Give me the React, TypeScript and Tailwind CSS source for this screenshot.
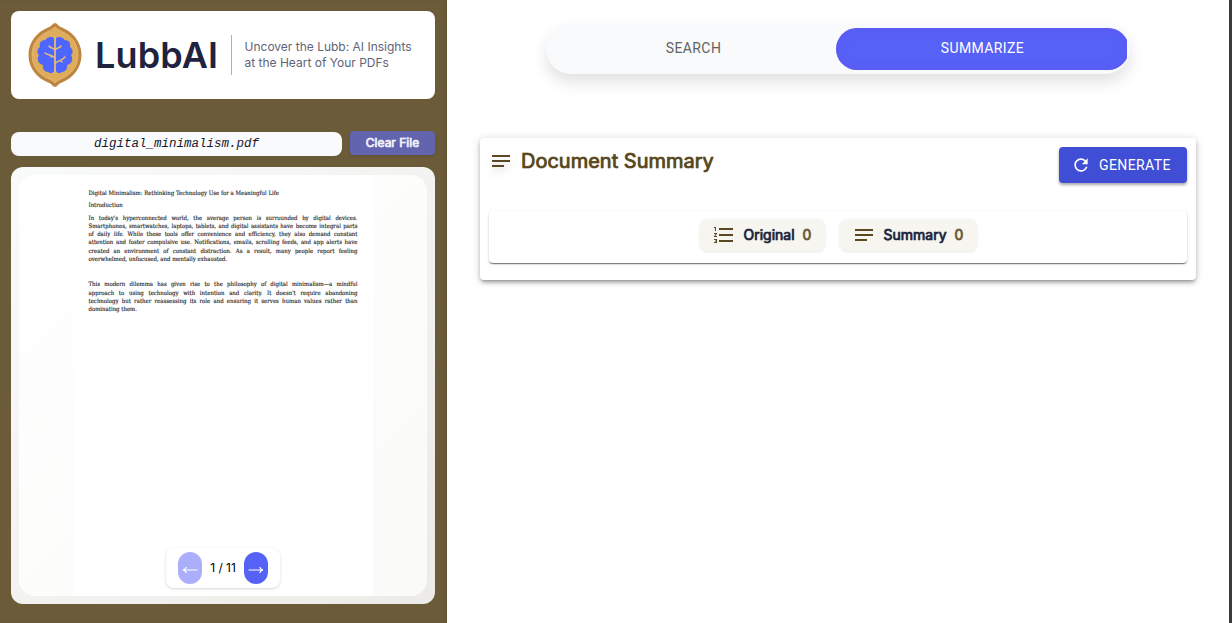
import React from "react";
import { MdFormatListNumbered, MdNotes, MdRefresh } from "react-icons/md";

const inter = "font-['Inter',sans-serif]";
const strong = "font-normal [-webkit-text-stroke:0.5px_currentColor] [text-shadow:0_0_1px_currentColor]";

function Logo() {
  return (
    <svg className="h-[64px] w-[54px]" viewBox="0 0 54 64">
      <path d="M27 0C29 0 30 3 34 4.500C45 9 53.500 19 53.500 32C53.500 45 45 55 34 59.500C30 61 29 64 27 64C25 64 24 61 20 59.500C9 55 .5 45 .5 32C.5 19 9 9 20 4.500C24 3 25 0 27 0Z" fill="#bd8540" />
      <path d="M27 4C29 6 31 7 34 8.500C44 13 50 21 50 32C50 43 44 51 34 55.500C31 57 29 58 27 60C25 58 23 57 20 55.500C10 51 4 43 4 32C4 21 10 13 20 8.500C23 7 25 6 27 4Z" fill="#dfac5c" stroke="#e9c17c" strokeWidth=".7" />
      <path d="M26.300 15C23 13 19 14 17.500 17C13 17 11 20 12 24C9 26 8.500 30 11 32C8.500 36 10 41 15 42C14 46 17 49 20 49C22 51 25 50 26.300 48Z" fill="#4d66ff" />
      <path d="M27.700 15C31 13 35 14 36.500 17C41 17 43 20 42 24C45 26 45.500 30 43 32C45.500 36 44 41 39 42C40 46 37 49 34 49C32 51 29 50 27.700 48Z" fill="#4d66ff" />
      <path d="M27 14V49M26.500 35C24 31 20 33 17 30M22 32L23.500 34M26.500 27C25 24 23 26 21 23M27 27C29 24 31 26 33 23M27 41C29 37 33 39 37 34M32 37.500L34 39" fill="none" stroke="#e8bd79" strokeWidth="1.400" strokeLinecap="round" />
    </svg>
  );
}

function Arrow({ flip }: { flip?: boolean }) {
  return (
    <svg className={flip ? "mt-[3px] h-[8px] w-[16px] rotate-180" : "mt-[3px] h-[8px] w-[16px]"} viewBox="0 0 16 8" fill="none" stroke="white" strokeWidth="1.100">
      <path d="M.5 4H15M11.500 1Q12.500 3.500 15 4Q12.500 4.500 11.500 7" />
    </svg>
  );
}

const first = [
  "In today's hyperconnected world, the average person is surrounded by digital devices.",
  "Smartphones, smartwatches, laptops, tablets, and digital assistants have become integral parts",
  "of daily life. While these tools offer convenience and efficiency, they also demand constant",
  "attention and foster compulsive use. Notifications, emails, scrolling feeds, and app alerts have",
  "created an environment of constant distraction. As a result, many people report feeling",
  "overwhelmed, unfocused, and mentally exhausted.",
];
const second = [
  "This modern dilemma has given rise to the philosophy of digital minimalism—a mindful",
  "approach to using technology with intention and clarity. It doesn't require abandoning",
  "technology but rather reassessing its role and ensuring it serves human values rather than",
  "dominating them.",
];

function Paragraph({ lines }: { lines: string[] }) {
  return (
    <div>
      {lines.map((line, i) => (
        <p key={line} className={i < lines.length - 1 ? "[text-align-last:justify]" : "whitespace-nowrap"}>
          {line}
        </p>
      ))}
    </div>
  );
}

function Sidebar() {
  return (
    <aside className="flex h-full w-[447px] shrink-0 flex-col bg-[#6b5b38] px-[11px] pt-[11px] pr-[12px] shadow-[inset_-3px_0_4px_-2px_rgba(0,0,0,0.12)]">
      <header className="flex h-[88px] shrink-0 items-center rounded-[8px] bg-white pl-[17px]">
        <Logo />
        <h1 className="ml-[13px] w-[136px] font-['Inter',sans-serif] text-[36px] leading-none font-semibold tracking-[0.150px] text-[#1f2340]">LubbAI</h1>
        <p className={`${inter} h-[40px] border-l border-[#b5b0a5] pt-[4px] pl-[12.500px] text-[12px] leading-[16px] whitespace-nowrap text-[#626477]`}>
          Uncover the Lubb: AI Insights<br />at the Heart of Your PDFs
        </p>
      </header>
      <div className="mt-[32px] flex h-[25px] shrink-0 items-end gap-[8px]">
        <div className="h-[24px] w-[331px] rounded-[8px] bg-[#f9fafc] text-center font-['Liberation_Mono',monospace] text-[12.500px] leading-[24px] text-[#16182e] italic">digital_minimalism.pdf</div>
        <button className={`${inter} ${strong} h-[24px] w-[85px] self-start rounded-[4px] bg-[#6264ae] text-[12px] leading-[24px] text-[#f1f1fa] shadow-sm`}>Clear File</button>
      </div>
      <section className="mt-[11px] h-[437px] rounded-[12px] bg-linear-to-br from-[#f9fafb] to-[#ecebe7] p-[8px]">
        <div className="relative flex h-[421px] justify-center overflow-hidden rounded-[16px] bg-linear-to-br from-white to-[#fafaf8]">
          <div className="w-[299px] bg-white pt-[14px] pr-[15px] pl-[15px] font-['DejaVu_Serif_Condensed','DejaVu_Serif',serif] text-[6px] leading-[8.280px] text-[#111] [-webkit-text-stroke:0.1px_currentColor]">
            <p>Digital Minimalism: Rethinking Technology Use for a Meaningful Life</p>
            <p className="mt-[4px]">Introduction</p>
            <div className="mt-[4px]"><Paragraph lines={first} /></div>
            <div className="mt-[17px]"><Paragraph lines={second} /></div>
          </div>
          <div className="absolute top-[373px] left-[147px] flex h-[40px] w-[114px] items-center justify-center gap-[8px] rounded-[8px] bg-white shadow-[0_1px_3px_rgba(0,0,0,0.16)]">
            <button aria-label="Previous page" className="flex h-[32px] w-[24px] items-center justify-center rounded-full bg-[#abaefa]"><Arrow flip /></button>
            <span className={`${inter} w-[26px] text-center text-[12px] whitespace-nowrap text-black`}>1 / 11</span>
            <button aria-label="Next page" className="flex h-[32px] w-[24px] items-center justify-center rounded-full bg-[#5661f6]"><Arrow /></button>
          </div>
        </div>
      </section>
    </aside>
  );
}

export default function App() {
  return (
    <div className="flex h-[623px] w-[1232px] overflow-hidden bg-white">
      <Sidebar />
      <main className="flex min-w-0 flex-1 flex-col px-[33px] pt-[24px]">
        <nav className="ml-[66px] flex h-[50px] w-[584px] shrink-0 rounded-full bg-[#f9fafc] py-[4px] pr-[3px] font-['Roboto',sans-serif] text-[14px] tracking-[0.400px] shadow-[0_8px_16px_rgba(0,0,0,0.12)]">
          <button className="w-[290px] shrink-0 pb-[1px] pl-[5px] text-[#626262]">SEARCH</button>
          <div className="w-[291px] shrink-0 overflow-hidden">
            <button className="h-[42px] w-[293px] rounded-[21px] bg-[#5661f6] pb-[1px] text-white shadow-[inset_0_0_10px_rgba(100,80,245,0.7)]">SUMMARIZE</button>
          </div>
        </nav>
        <section className="mt-[64px] h-[142px] w-[716px] rounded-[4px] bg-white px-[9px] pt-[9px] shadow-[0_3px_3px_-2px_rgba(0,0,0,0.25),0_3px_4px_rgba(0,0,0,0.18),0_1px_8px_rgba(0,0,0,0.16)]">
          <div className="flex h-[64px] items-start">
            <MdNotes className="mt-[2px] h-[24px] w-[24px] text-[#5b4820] drop-shadow-[0_5px_4px_rgba(0,0,0,0.15)]" />
            <h2 className={`${inter} ${strong} ml-[8px] text-[20px] leading-[28px] text-[#5b4820]`}>Document Summary</h2>
            <button className="ml-auto flex h-[36px] w-[128px] items-center rounded-[4px] bg-[#404ed6] pl-[12px] font-['Roboto',sans-serif] text-[14px] tracking-[0.400px] text-white shadow-[0_2px_3px_rgba(0,0,0,0.35)]">
              <MdRefresh className="mr-[8px] h-[20px] w-[20px]" />
              GENERATE
            </button>
          </div>
          <div className="flex h-[52px] justify-center gap-[15px] rounded-[4px] bg-white pt-[8px] shadow-[0_2px_1px_-1px_rgba(0,0,0,0.3),0_1px_1px_rgba(0,0,0,0.24),0_1px_3px_rgba(0,0,0,0.16)]">
            <div className={`${inter} ${strong} flex h-[32px] w-[125px] items-center rounded-[8px] bg-[#f6f5f0] pb-[1px] pl-[12px] text-[14px] text-[#23253d] shadow-[0_1px_3px_rgba(0,0,0,0.1)]`}>
              <MdFormatListNumbered className="h-[24px] w-[24px] text-[#5b4820]" stroke="none" />
              <span className="ml-[8px]">Original</span><span className="ml-[8px] text-[#6b5b38]">0</span>
            </div>
            <div className={`${inter} ${strong} flex h-[32px] w-[137px] items-center rounded-[8px] bg-[#f6f5f0] pb-[1px] pl-[12px] text-[14px] text-[#23253d] shadow-[0_1px_3px_rgba(0,0,0,0.1)]`}>
              <MdNotes className="h-[24px] w-[24px] text-[#5b4820]" />
              <span className="ml-[8px]">Summary</span><span className="ml-[8px] text-[#6b5b38]">0</span>
            </div>
          </div>
        </section>
      </main>
      <div className="w-[3px] shrink-0 bg-[#3b3b3f]" />
    </div>
  );
}
